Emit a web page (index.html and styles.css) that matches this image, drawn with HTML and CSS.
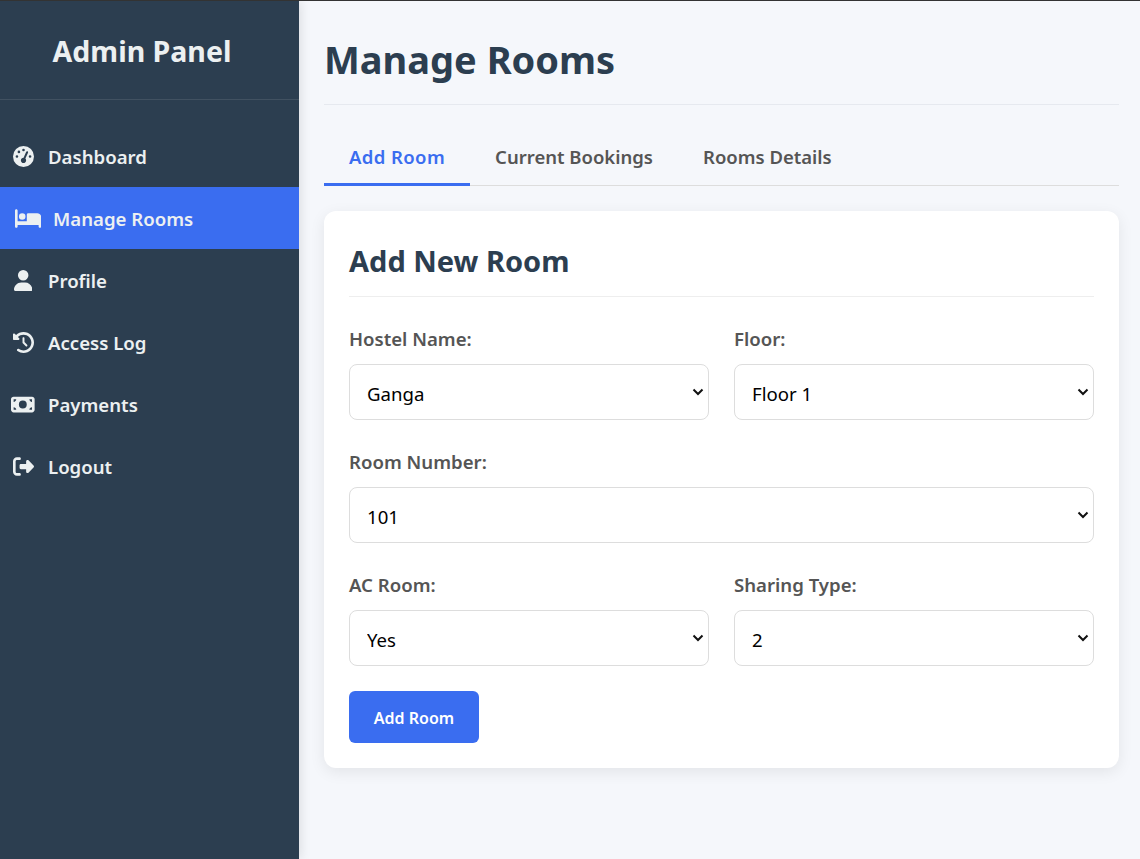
FILE: index.html
```html
<!DOCTYPE html>
<html lang="en">

<head>
    <meta charset="UTF-8">
    <meta name="viewport" content="width=device-width, initial-scale=1.0">
    <title>Manage Rooms</title>
    <link rel="stylesheet" href="styles.css">
</head>

<body>
    <div class="layout">
        <aside class="sidebar">
            <div class="sidebar-header">
                <h2>Admin Panel</h2>
            </div>
            <ul class="nav">
                <li><a href="#"><span class="icon"><svg viewBox="0 0 512 512"><path d="M0 256a256 256 0 1 1 512 0A256 256 0 1 1 0 256zM288 96a32 32 0 1 0 -64 0 32 32 0 1 0 64 0zM256 416c35.3 0 64-28.7 64-64c0-17.4-6.9-33.1-18.1-44.6L366 161.7c5.3-12.1-.2-26.3-12.3-31.6s-26.3 .2-31.6 12.3L257.9 288c-.6 0-1.3 0-1.9 0c-35.3 0-64 28.7-64 64s28.7 64 64 64zM176 144a32 32 0 1 0 -64 0 32 32 0 1 0 64 0zM96 288a32 32 0 1 0 0-64 32 32 0 1 0 0 64zm352-32a32 32 0 1 0 -64 0 32 32 0 1 0 64 0z"/></svg></span>Dashboard</a></li>
                <li class="active"><a href="#"><span class="icon"><svg viewBox="0 0 640 512"><path d="M32 32c17.7 0 32 14.3 32 32V320H288V160c0-17.7 14.3-32 32-32H544c53 0 96 43 96 96V448c0 17.7-14.3 32-32 32s-32-14.3-32-32V416H352 320 64v32c0 17.7-14.3 32-32 32s-32-14.3-32-32V64C0 46.3 14.3 32 32 32zm144 96a80 80 0 1 1 0 160 80 80 0 1 1 0-160z"/></svg></span>Manage Rooms</a></li>
                <li><a href="#"><span class="icon"><svg viewBox="0 0 448 512"><path d="M224 256A128 128 0 1 0 224 0a128 128 0 1 0 0 256zm-45.7 48C79.8 304 0 383.8 0 482.3C0 498.7 13.3 512 29.7 512H418.3c16.4 0 29.7-13.3 29.7-29.7C448 383.8 368.2 304 269.7 304H178.3z"/></svg></span>Profile</a></li>
                <li><a href="#"><span class="icon"><svg viewBox="0 0 512 512"><path d="M75 75L41 41C25.9 25.9 0 36.6 0 57.9V168c0 13.3 10.7 24 24 24H134.1c21.4 0 32.1-25.9 17-41l-30.8-30.8C155 85.5 203 64 256 64c106 0 192 86 192 192s-86 192-192 192c-40.8 0-78.6-12.7-109.7-34.4c-14.5-10.1-34.4-6.6-44.6 7.9s-6.6 34.4 7.9 44.6C151.2 495 201.7 512 256 512c141.4 0 256-114.6 256-256S397.4 0 256 0C185.3 0 121.3 28.7 75 75zm181 53c-13.3 0-24 10.7-24 24V256c0 6.4 2.5 12.5 7 17l72 72c9.4 9.4 24.6 9.4 33.9 0s9.4-24.6 0-33.9l-65-65V152c0-13.3-10.7-24-24-24z"/></svg></span>Access Log</a></li>
                <li><a href="#"><span class="icon"><svg viewBox="0 0 576 512"><path d="M64 64C28.7 64 0 92.7 0 128V384c0 35.3 28.7 64 64 64H512c35.3 0 64-28.7 64-64V128c0-35.3-28.7-64-64-64H64zm64 320H64V320c35.3 0 64 28.7 64 64zM64 192V128h64c0 35.3-28.7 64-64 64zM448 384c0-35.3 28.7-64 64-64v64H448zm64-192c-35.3 0-64-28.7-64-64h64v64zM288 160a96 96 0 1 1 0 192 96 96 0 1 1 0-192z"/></svg></span>Payments</a></li>
                <li><a href="#"><span class="icon"><svg viewBox="0 0 512 512"><path d="M377.9 105.9L500.7 228.7c7.2 7.2 11.3 17.1 11.3 27.3s-4.1 20.1-11.3 27.3L377.9 406.1c-6.4 6.4-15 9.9-24 9.9c-18.7 0-33.9-15.2-33.9-33.9l0-62.1-128 0c-17.7 0-32-14.3-32-32l0-64c0-17.7 14.3-32 32-32l128 0 0-62.1c0-18.7 15.2-33.9 33.9-33.9c9 0 17.6 3.6 24 9.9zM160 96L96 96c-17.7 0-32 14.3-32 32l0 256c0 17.7 14.3 32 32 32l64 0c17.7 0 32 14.3 32 32s-14.3 32-32 32l-64 0c-53 0-96-43-96-96L0 128C0 75 43 32 96 32l64 0c17.7 0 32 14.3 32 32s-14.3 32-32 32z"/></svg></span>Logout</a></li>
            </ul>
        </aside>

        <main class="content">
            <div class="page-header">
                <h1>Manage Rooms</h1>
            </div>

            <div class="tabs">
                <div class="tab current">Add Room</div>
                <div class="tab">Current Bookings</div>
                <div class="tab">Rooms Details</div>
            </div>

            <div class="card">
                <h2 class="card-title">Add New Room</h2>
                <form class="room-form">
                    <div class="field">
                        <label for="hostel">Hostel Name:</label>
                        <select id="hostel">
                            <option>Ganga</option>
                        </select>
                    </div>
                    <div class="field">
                        <label for="floor">Floor:</label>
                        <select id="floor">
                            <option>Floor 1</option>
                        </select>
                    </div>
                    <div class="field wide">
                        <label for="room">Room Number:</label>
                        <select id="room">
                            <option>101</option>
                        </select>
                    </div>
                    <div class="field">
                        <label for="ac">AC Room:</label>
                        <select id="ac">
                            <option>Yes</option>
                        </select>
                    </div>
                    <div class="field">
                        <label for="sharing">Sharing Type:</label>
                        <select id="sharing">
                            <option>2</option>
                        </select>
                    </div>
                    <div class="wide">
                        <button type="button" class="btn">Add Room</button>
                    </div>
                </form>
            </div>
        </main>
    </div>
</body>

</html>
```

FILE: styles.css
```css
* {
    padding: 0;
    margin: 0;
    list-style: none;
    box-sizing: border-box;
}

body {
    font-family: "Noto Sans", "Open Sans", sans-serif;
    background: #f5f7fb;
    border-top: 1px solid #333;
}

.layout {
    display: flex;
    min-height: 858px;
}

.sidebar {
    width: 299px;
    flex-shrink: 0;
    background: #2c3e50;
    color: #ecf0f1;
    box-shadow: 2px 0 10px rgba(0, 0, 0, 0.1);
}

.sidebar-header {
    height: 99px;
    padding: 30px 15px 0 0;
    text-align: center;
    border-bottom: 1px solid rgba(255, 255, 255, 0.1);
}

.sidebar-header h2 {
    font-size: 28.5px;
    line-height: 40px;
    font-weight: 700;
}

.nav {
    padding-top: 25px;
}

.nav a {
    display: flex;
    align-items: center;
    height: 62px;
    padding: 0 0 0 11px;
    color: #ecf0f1;
    text-decoration: none;
    font-size: 18.6px;
    font-weight: 600;
}

.nav .active a {
    background: #3a6df0;
    padding-left: 16px;
}

.icon {
    display: flex;
    justify-content: center;
    flex-shrink: 0;
    width: 24px;
    margin: 0 13px 0 0;
}

.icon svg {
    flex-shrink: 0;
    height: 21px;
    fill: #ecf0f1;
}

.content {
    flex: 1;
    padding: 25px 21px 25px 25px;
}

.page-header {
    height: 79px;
    border-bottom: 1px solid #e6e9ef;
    margin-bottom: 25px;
}

.page-header h1 {
    font-size: 38px;
    line-height: 66px;
    font-weight: 700;
    color: #2c3e50;
}

.tabs {
    display: flex;
    height: 56px;
    border-bottom: 1px solid #ddd;
    margin-bottom: 25px;
}

.tab {
    height: 56px;
    padding: 0 25px;
    line-height: 54px;
    font-size: 18.5px;
    font-weight: 600;
    color: #555;
}

.tab.current {
    color: #3a6df0;
    letter-spacing: 0.4px;
    border-bottom: 3px solid #3a6df0;
}

.card {
    background: #fff;
    border-radius: 12px;
    padding: 25px;
    box-shadow: 0 4px 15px rgba(0, 0, 0, 0.08);
}

.card-title {
    height: 61px;
    font-size: 29px;
    line-height: 49px;
    font-weight: 700;
    color: #2c3e50;
    border-bottom: 1px solid #eee;
    margin-bottom: 25px;
}

.room-form {
    display: grid;
    grid-template-columns: 1fr 1fr;
    column-gap: 25px;
    row-gap: 25px;
}

.wide {
    grid-column: 1 / 3;
}

.field label {
    display: block;
    height: 42px;
    line-height: 34px;
    font-size: 18.6px;
    font-weight: 600;
    color: #555;
}

.field select {
    display: block;
    width: 100%;
    height: 56px;
    padding: 2px 0 0 17px;
    font-family: inherit;
    font-size: 18.6px;
    color: #000;
    border: 1px solid #ddd;
    border-radius: 8px;
    appearance: none;
    background: #fff url("data:image/svg+xml,%3Csvg xmlns='http://www.w3.org/2000/svg' viewBox='0 0 12 8'%3E%3Cpath d='M1.5 1.5 6 6l4.5-4.5' fill='none' stroke='%23111' stroke-width='2'/%3E%3C/svg%3E") no-repeat right 4px center / 12px 8px;
}

.btn {
    display: block;
    width: 130px;
    height: 52px;
    padding-top: 2px;
    background: #3a6df0;
    color: #fff;
    border: 0;
    border-radius: 6px;
    font-family: inherit;
    font-size: 16px;
    font-weight: 600;
}
```
